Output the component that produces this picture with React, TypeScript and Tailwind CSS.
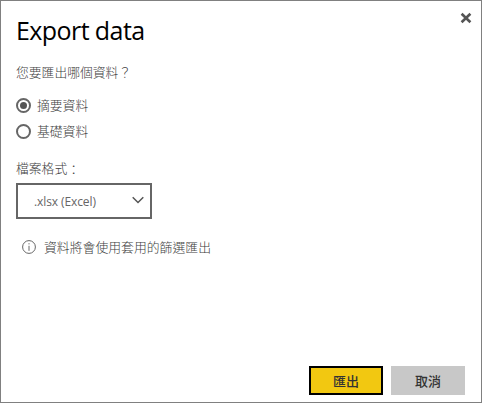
import { useState } from 'react';

type Choice = { id: string; label: string };

const choices: Choice[] = [
  { id: 'summary', label: '摘要資料' },
  { id: 'underlying', label: '基礎資料' },
];

function Radio({ checked }: { checked: boolean }) {
  return (
    <span className="flex size-[15px] shrink-0 items-center justify-center rounded-full border-2 border-[#666]">
      {checked && <span className="size-[7px] rounded-full bg-[#555]" />}
    </span>
  );
}

export default function App() {
  const [selected, setSelected] = useState('summary');

  return (
    <div className="flex h-[403px] w-[482px] flex-col border border-[#808080] bg-white text-[12.8px] text-[#404040]">
      <header className="flex h-[60px] shrink-0 items-start justify-between pt-[11px] pr-[9px] pl-[15px]">
        <h1 className="font-['Open_Sans',sans-serif] text-[25px] leading-9 tracking-[-0.58px] whitespace-nowrap text-black">
          Export data
        </h1>
        <button aria-label="Close" className="block size-3">
          <svg viewBox="0 0 12 12" className="size-3" fill="none" stroke="#555" strokeWidth="2.6">
            <path d="M1.6 1.7 10.4 10.3M10.4 1.7 1.6 10.3" />
          </svg>
        </button>
      </header>

      <main className="flex flex-1 flex-col items-start pl-[15px] font-['Noto_Sans_CJK_TC',sans-serif] font-light">
        <p className="h-[22px] leading-[22px]">您要匯出哪個資料？</p>
        <div className="mt-[9px] flex flex-col">
          {choices.map((choice) => (
            <button
              key={choice.id}
              onClick={() => setSelected(choice.id)}
              className="flex h-[26px] items-center gap-[6px]"
            >
              <Radio checked={selected === choice.id} />
              <span className="leading-5">{choice.label}</span>
            </button>
          ))}
        </div>
        <p className="mt-[13px] h-[22px] leading-[22px]">
          檔案格式<span className="inline-block translate-y-px">：</span>
        </p>
        <button className="mt-[4px] flex h-9 w-[136px] items-center justify-between border-2 border-[#666] pr-[6px] pl-4">
          <span className="mt-[2px] font-['Open_Sans',sans-serif] text-[12px] font-normal tracking-[-0.1px] text-[#666]">.xlsx (Excel)</span>
          <svg viewBox="0 0 12 8" className="mb-[3px] h-2 w-3" fill="none" stroke="#555" strokeWidth="1.5">
            <path d="M.7 1.2 6 6.5l5.3-5.3" />
          </svg>
        </button>
        <div className="mt-[17px] ml-[6px] flex h-[22px] items-center gap-2">
          <svg viewBox="0 0 14 14" className="size-[14px]" fill="none" stroke="#666">
            <circle cx="7" cy="7" r="6.4" />
            <path d="M7 3.2v1.2M7 5.8v5" />
          </svg>
          <span className="text-[12.85px]">資料將會使用套用的篩選匯出</span>
        </div>
      </main>

      <footer className="flex shrink-0 justify-end gap-2 pr-4 pb-[7px] font-['Noto_Sans_CJK_TC',sans-serif] text-[13px] font-medium text-[#333]">
        <button className="h-[29px] w-[74px] border-2 border-black bg-[#f2c811]">匯出</button>
        <button className="h-[29px] w-[74px] bg-[#c8c8c8]">取消</button>
      </footer>
    </div>
  );
}
